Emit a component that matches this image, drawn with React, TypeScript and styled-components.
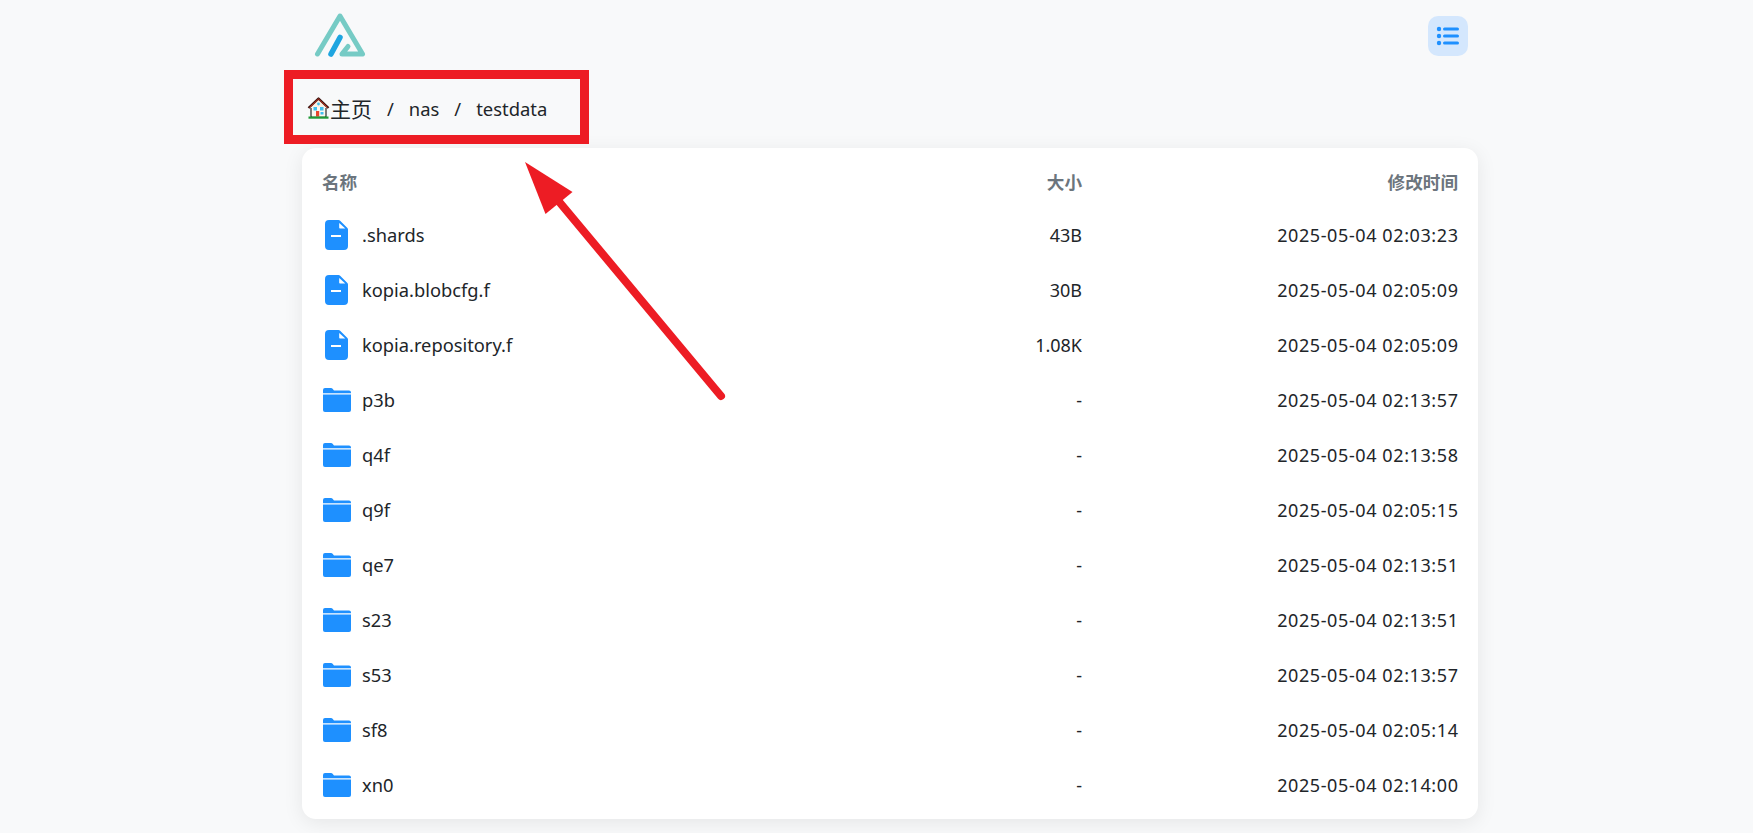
import React from "react";
import styled, { createGlobalStyle } from "styled-components";

const GlobalStyle = createGlobalStyle`
  html, body {
    margin: 0;
    padding: 0;
    height: 100%;
    overflow: hidden;
    background: #f8f9fa;
    font-family: "Noto Sans", "Noto Sans CJK SC", sans-serif;
    color: #212529;
  }
`;

const Page = styled.div`
  position: relative;
  width: 1176px;
  margin-left: 302px;
`;

const Header = styled.header`
  display: flex;
  align-items: flex-start;
  justify-content: space-between;
  height: 86px;
  padding: 12px 10px 0 12px;
  box-sizing: border-box;
`;

const MenuButton = styled.button`
  display: flex;
  align-items: center;
  justify-content: center;
  width: 40px;
  height: 40px;
  margin-top: 4px;
  padding: 0;
  border: 0;
  border-radius: 10px;
  background: #d4e7fd;
`;

const Breadcrumb = styled.nav`
  display: flex;
  align-items: center;
  height: 44px;
  margin-left: 5px;
  font-size: 18.4px;
`;

const HomeLink = styled.span`
  display: flex;
  align-items: center;
  font-size: 21px;
`;

const Divider = styled.span`
  margin: 0 15px;
`;

const Card = styled.section`
  margin-top: 18px;
  padding: 7px 0 6.5px;
  background: #fff;
  border-radius: 14px;
  box-shadow: 0 4px 20px rgba(0, 0, 0, 0.08);
`;

const Row = styled.div<{ $head?: boolean }>`
  display: grid;
  grid-template-columns: 1fr 120px 376px;
  align-items: center;
  height: ${({ $head }) => ($head ? "52px" : "55px")};
  padding: 0 20px;
  font-size: ${({ $head }) => ($head ? "17.6px" : "18px")};
  font-weight: ${({ $head }) => ($head ? 700 : 400)};
  color: ${({ $head }) => ($head ? "#6c757d" : "#212529")};
`;

const NameCell = styled.div`
  display: flex;
  align-items: center;
  gap: 10px;
  font-size: 18.3px;
`;

const IconSlot = styled.span`
  display: flex;
  justify-content: center;
  width: 30px;
`;

const RightCell = styled.div`
  text-align: right;
`;

const TimeCell = styled(RightCell)`
  letter-spacing: 0.6px;
  margin-right: -0.6px;
`;

const Annotation = styled.svg`
  position: absolute;
  top: 0;
  left: -302px;
  pointer-events: none;
`;

const Logo = () => (
  <svg width="52" height="48" viewBox="0 0 52 48" fill="none" strokeLinecap="round" strokeLinejoin="round">
    <path d="M3.5 42 L26 4 L48.5 42 L28 42 L34 34.5" stroke="#76cbc5" strokeWidth="5" />
    <path d="M17 42 L26 25.5" stroke="#1fa5e0" strokeWidth="5.5" />
  </svg>
);

const ListIcon = () => (
  <svg width="24" height="20" viewBox="0 0 24 20" fill="#1e90ff">
    <circle cx="3" cy="3" r="2.2" />
    <circle cx="3" cy="10" r="2.2" />
    <circle cx="3" cy="17" r="2.2" />
    <rect x="7" y="1.6" width="16" height="3" rx="1.5" />
    <rect x="7" y="8.6" width="16" height="3" rx="1.5" />
    <rect x="7" y="15.6" width="16" height="3" rx="1.5" />
  </svg>
);

const HouseIcon = () => (
  <svg width="23" height="22" viewBox="0 0 23 22">
    <rect x="4" y="9" width="15" height="11" fill="#fbf7f0" stroke="#2a2a2a" strokeWidth="1.2" />
    <path d="M1.5 11 L11.5 1.5 L21.5 11" fill="#fbf0e4" stroke="#3a1410" strokeWidth="2.4" strokeLinejoin="round" />
    <path d="M2.5 10.5 L11.5 2 L20.5 10.5" fill="none" stroke="#c8321f" strokeWidth="1" />
    <rect x="5" y="10" width="13" height="9.5" fill="#fbf7f0" />
    <rect x="6.5" y="10" width="3.5" height="3.5" fill="#3fc0f0" />
    <rect x="13" y="10" width="3.5" height="3.5" fill="#3fc0f0" />
    <circle cx="11.5" cy="7" r="1.4" fill="#3fc0f0" />
    <rect x="9" y="14" width="3.2" height="5.6" fill="#e8452c" />
    <rect x="13.5" y="15" width="3" height="2.5" fill="#3fc0f0" />
    <rect x="1.5" y="19.5" width="20" height="2.2" fill="#1f9a36" />
  </svg>
);

const FileIcon = () => (
  <svg width="23" height="30" viewBox="0 0 23 30" style={{ marginLeft: -2 }}>
    <path
      fill="#1e90ff"
      d="M4 0 H13.5 a2 2 0 0 1 1.4 0.6 L22.4 8 a2 2 0 0 1 0.6 1.4 V26 a4 4 0 0 1 -4 4 H4 a4 4 0 0 1 -4 -4 V4 a4 4 0 0 1 4 -4 Z"
    />
    <path fill="#fff" d="M14.2 3 L20.3 8.6 H15 a0.8 0.8 0 0 1 -0.8 -0.8 Z" />
    <rect x="6" y="15" width="10" height="2" fill="#fff" />
  </svg>
);

const FolderIcon = () => (
  <svg width="28" height="24" viewBox="0 0 28 24" fill="#1e90ff">
    <path d="M0 5.2 V2 a2 2 0 0 1 2 -2 H8 a2 2 0 0 1 1.6 0.8 L11 2.4 H26 a2 2 0 0 1 2 2 V5.2 Z" />
    <path d="M0 6.6 H28 V22 a2 2 0 0 1 -2 2 H2 a2 2 0 0 1 -2 -2 Z" />
  </svg>
);

type Entry = { name: string; size: string; time: string; dir?: boolean };

const entries: Entry[] = [
  { name: ".shards", size: "43B", time: "2025-05-04 02:03:23" },
  { name: "kopia.blobcfg.f", size: "30B", time: "2025-05-04 02:05:09" },
  { name: "kopia.repository.f", size: "1.08K", time: "2025-05-04 02:05:09" },
  { name: "p3b", size: "-", time: "2025-05-04 02:13:57", dir: true },
  { name: "q4f", size: "-", time: "2025-05-04 02:13:58", dir: true },
  { name: "q9f", size: "-", time: "2025-05-04 02:05:15", dir: true },
  { name: "qe7", size: "-", time: "2025-05-04 02:13:51", dir: true },
  { name: "s23", size: "-", time: "2025-05-04 02:13:51", dir: true },
  { name: "s53", size: "-", time: "2025-05-04 02:13:57", dir: true },
  { name: "sf8", size: "-", time: "2025-05-04 02:05:14", dir: true },
  { name: "xn0", size: "-", time: "2025-05-04 02:14:00", dir: true },
];

export default function App() {
  return (
    <Page>
      <GlobalStyle />
      <Header>
        <Logo />
        <MenuButton>
          <ListIcon />
        </MenuButton>
      </Header>
      <Breadcrumb>
        <HomeLink>
          <HouseIcon />
          主页
        </HomeLink>
        <Divider>/</Divider>
        <span>nas</span>
        <Divider>/</Divider>
        <span>testdata</span>
      </Breadcrumb>
      <Card>
        <Row $head>
          <div>名称</div>
          <RightCell>大小</RightCell>
          <RightCell>修改时间</RightCell>
        </Row>
        {entries.map((entry) => (
          <Row key={entry.name}>
            <NameCell>
              <IconSlot>{entry.dir ? <FolderIcon /> : <FileIcon />}</IconSlot>
              {entry.name}
            </NameCell>
            <RightCell>{entry.size}</RightCell>
            <TimeCell>{entry.time}</TimeCell>
          </Row>
        ))}
      </Card>
      <Annotation width="1753" height="833" viewBox="0 0 1753 833">
        <rect x="288.5" y="74.5" width="296" height="65" fill="none" stroke="#ed1c24" strokeWidth="9" />
        <path d="M721 396 L556 198" stroke="#ed1c24" strokeWidth="8" strokeLinecap="round" />
        <path d="M525 162 L572.5 192 L545.5 214 Z" fill="#ed1c24" />
      </Annotation>
    </Page>
  );
}
